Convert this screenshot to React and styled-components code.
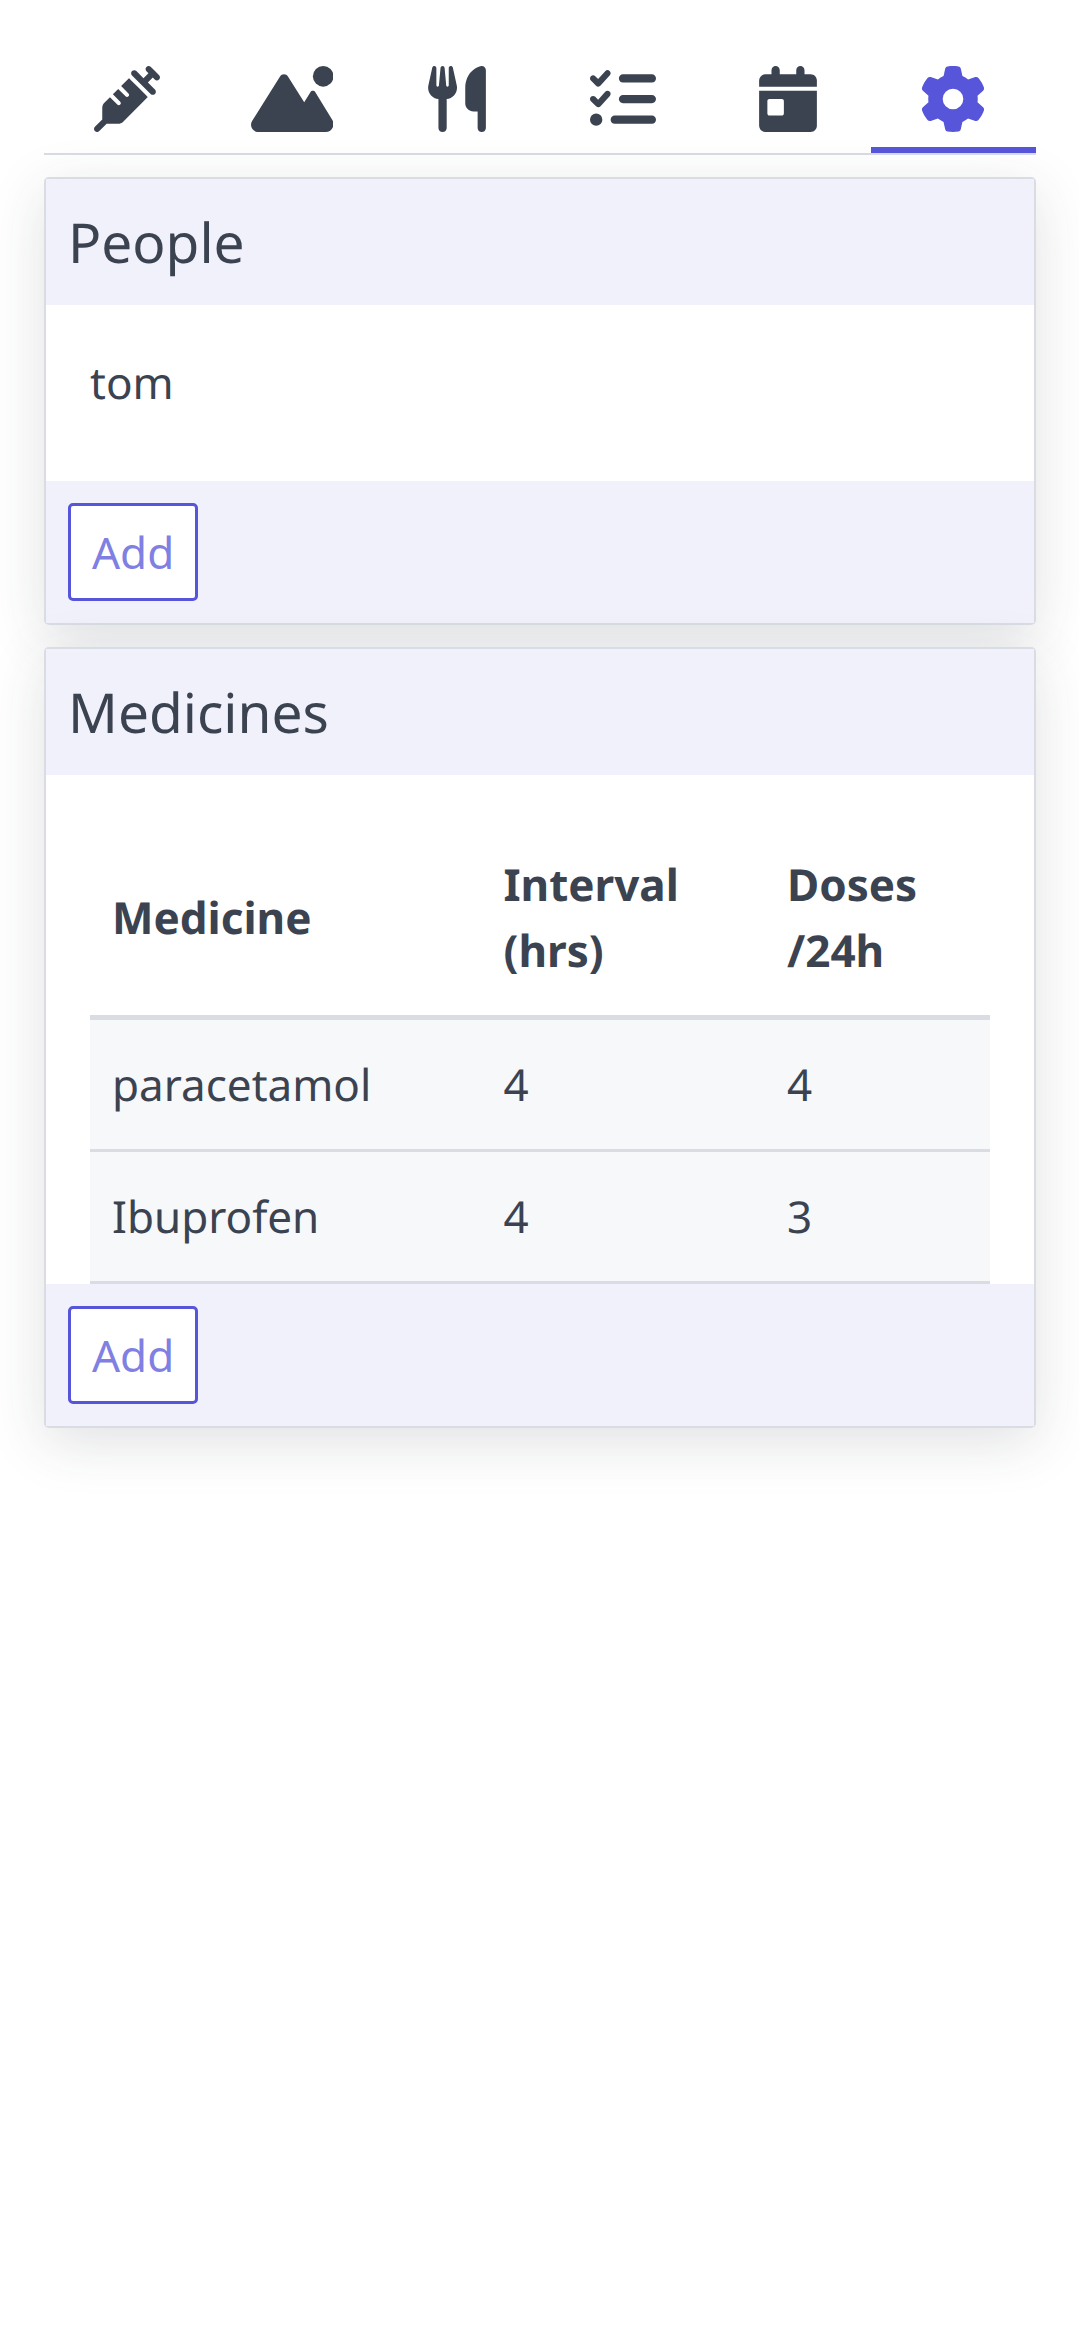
import React, { useState } from 'react';
import styled, { createGlobalStyle, ThemeProvider } from 'styled-components';
import {
  FaSyringe,
  FaUtensils,
  FaListCheck,
  FaCalendarDay,
  FaGear,
} from 'react-icons/fa6';

const theme = {
  color: {
    text: '#3b4351',
    primary: '#5755d9',
    primaryLight: '#807fe2',
    secondary: '#f1f1fc',
    border: '#dadce4',
    stripe: '#f7f8fa',
    white: '#ffffff',
  },
};

const GlobalStyle = createGlobalStyle`
  * {
    box-sizing: border-box;
  }
  body {
    margin: 0;
    background: ${({theme}) => theme.color.white};
    color: ${({theme}) => theme.color.text};
    font-family: 'Noto Sans', sans-serif;
    font-size: 44px;
    line-height: 66px;
    text-rendering: geometricPrecision;
  }
`;

const Page = styled.main`
  min-height: 100vh;
  display: flex;
  flex-direction: column;
  gap: 22px;
  padding: 44px 43px 44px 44px;
`;

const Tabs = styled.nav`
  display: flex;
  border-bottom: 2px solid ${({theme}) => theme.color.border};
`;

const TabLink = styled.a`
  flex: 1;
  display: flex;
  justify-content: center;
  padding: 22px 0 15px;
  text-decoration: none;
  color: ${({theme, $active}) => $active ? theme.color.primary : theme.color.text};
  border-bottom: 6px solid ${({theme, $active}) => $active ? theme.color.primary : 'transparent'};

  svg {
    width: auto;
    height: 66px;
  }
`;

const CardBox = styled.section`
  background: ${({theme}) => theme.color.white};
  border: 2px solid ${({theme}) => theme.color.border};
  border-radius: 5px;
  box-shadow: 0 14px 55px rgba(48, 55, 66, 0.15);
`;

const CardHeader = styled.header`
  padding: 23px 22px 21px;
  background: ${({theme}) => theme.color.secondary};
`;

const CardTitle = styled.h2`
  margin: 0;
  font-size: 55px;
  font-weight: 400;
  line-height: 82px;
`;

const CardBody = styled.div`
  padding: 44px 44px 0;
`;

const CardFooter = styled.footer`
  padding: 22px;
  background: ${({theme}) => theme.color.secondary};
`;

const AddButton = styled.button`
  display: block;
  height: 98px;
  padding: 0 21px;
  background: ${({theme}) => theme.color.white};
  border: 3px solid ${({theme}) => theme.color.primary};
  border-radius: 5px;
  color: ${({theme}) => theme.color.primaryLight};
  font: inherit;
  cursor: pointer;
`;

const PeopleList = styled.ul`
  margin: 0;
  padding: 0 0 66px;
  list-style: none;
`;

const MedicineTable = styled.table`
  width: 100%;
  border-spacing: 0;
  table-layout: fixed;
  text-align: left;
`;

const HeadCell = styled.th`
  width: ${({$width}) => $width};
  padding: 32px 22px;
  border-bottom: 5px solid ${({theme}) => theme.color.border};
  font-weight: 700;
`;

const Cell = styled.td`
  padding: 31px 22px 32px;
  background: ${({theme}) => theme.color.stripe};
  border-bottom: 3px solid ${({theme}) => theme.color.border};
`;

function MountainIcon () {
  return (
    <svg viewBox="0 0 640 512" fill="currentColor" aria-hidden="true">
      <circle cx="560" cy="80" r="80" />
      <path d="M55.9 512H578.9c33.8 0 61.1-27.4 61.1-61.1c0-11.2-3.1-22.2-8.9-31.8l-132-216.3C495 196.1 487.8 192 480 192s-15 4.1-19.1 10.7l-48.2 79L286.8 81c-6.6-10.6-18.3-17-30.8-17s-24.1 6.4-30.8 17L8.6 426.4C3 435.3 0 445.6 0 456.1C0 487 25 512 55.9 512z" />
    </svg>
  );
}

const tabs = [
  { id: 'medicine', label: 'Medicine', Icon: FaSyringe },
  { id: 'outdoors', label: 'Outdoors', Icon: MountainIcon },
  { id: 'food', label: 'Food', Icon: FaUtensils },
  { id: 'tasks', label: 'Tasks', Icon: FaListCheck },
  { id: 'calendar', label: 'Calendar', Icon: FaCalendarDay },
  { id: 'settings', label: 'Settings', Icon: FaGear },
];

const people = ['tom'];

const medicines = [
  { name: 'paracetamol', interval: 4, doses: 4 },
  { name: 'Ibuprofen', interval: 4, doses: 3 },
];

function Card ({ title, children }) {
  return (
    <CardBox>
      <CardHeader>
        <CardTitle>{title}</CardTitle>
      </CardHeader>
      <CardBody>{children}</CardBody>
      <CardFooter>
        <AddButton type="button">Add</AddButton>
      </CardFooter>
    </CardBox>
  );
}

function App () {
  const [active, setActive] = useState('settings');

  return (
    <ThemeProvider theme={theme}>
      <GlobalStyle />
      <Page>
        <Tabs>
          {tabs.map(({ id, label, Icon }) => (
            <TabLink
              key={id}
              href={`#${id}`}
              aria-label={label}
              $active={id === active}
              onClick={() => setActive(id)}
            >
              <Icon />
            </TabLink>
          ))}
        </Tabs>
        <Card title="People">
          <PeopleList>
            {people.map((person) => <li key={person}>{person}</li>)}
          </PeopleList>
        </Card>
        <Card title="Medicines">
          <MedicineTable>
            <thead>
              <tr>
                <HeadCell $width="43.5%">Medicine</HeadCell>
                <HeadCell $width="31.5%">Interval (hrs)</HeadCell>
                <HeadCell $width="25%">Doses /24h</HeadCell>
              </tr>
            </thead>
            <tbody>
              {medicines.map(({ name, interval, doses }) => (
                <tr key={name}>
                  <Cell>{name}</Cell>
                  <Cell>{interval}</Cell>
                  <Cell>{doses}</Cell>
                </tr>
              ))}
            </tbody>
          </MedicineTable>
        </Card>
      </Page>
    </ThemeProvider>
  );
}

export default App
